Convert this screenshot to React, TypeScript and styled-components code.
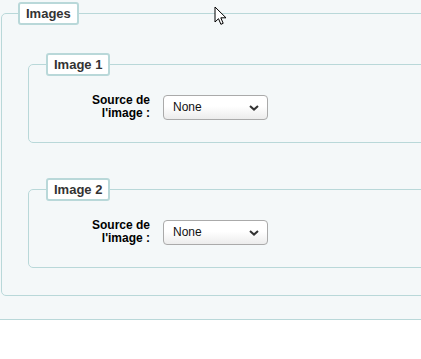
import styled, { createGlobalStyle } from "styled-components";

const GlobalStyle = createGlobalStyle`
  html, body {
    margin: 0;
    padding: 0;
    overflow: hidden;
    background: #fff;
  }
  body {
    font-family: "Liberation Sans", Arial, sans-serif;
    color: #000;
  }
`;

const Page = styled.div`
  position: relative;
  overflow: hidden;
  background: #f4f8f9;
  border-bottom: 1px solid #b9d8d9;
  padding: 2px 0 23px 1px;
`;

const Group = styled.fieldset`
  margin: 0 -40px 0 0;
  padding: 28px 0 27px 16px;
  border: 1px solid #b9d8d9;
  border-radius: 5px;
  background: #f4f8f9;
  min-width: 0;
`;

const SubGroup = styled.fieldset`
  margin: 0 -40px 0 10px;
  padding: 18px 0 22px 17px;
  border: 1px solid #b9d8d9;
  border-radius: 5px;
  background: #f4f8f9;
  min-width: 0;

  & + & {
    margin-top: 35px;
  }
`;

const Legend = styled.legend`
  padding: 2px 6px;
  margin: 0;
  background: #fff;
  border: 2px solid #b9d8d9;
  border-radius: 3px;
  font-size: 13px;
  line-height: 15px;
  font-weight: bold;
  color: #333;
`;

const Row = styled.div`
  display: flex;
  align-items: center;
  gap: 13px;
`;

const Label = styled.label`
  width: 104px;
  text-align: right;
  font-size: 12px;
  line-height: 13px;
  font-weight: bold;
`;

const SelectWrap = styled.div`
  position: relative;
  width: 105px;
  height: 25px;
`;

const Select = styled.select`
  appearance: none;
  width: 100%;
  height: 100%;
  margin: 0;
  padding: 0 0 0 9px;
  border: 1px solid #aaa;
  border-radius: 4px;
  background: linear-gradient(#fff 0%, #fff 45%, #ececec 100%);
  font-family: "Liberation Sans", Arial, sans-serif;
  font-size: 12px;
  color: #111;
  outline: none;
`;

const Chevron = styled.svg`
  position: absolute;
  right: 9px;
  top: 10px;
  pointer-events: none;
`;

const Cursor = styled.svg`
  position: absolute;
  left: 214px;
  top: 6px;
`;

function ImageSource({ id }: { id: string }) {
  return (
    <Row>
      <Label htmlFor={id}>
        Source de
        <br />
        l'image :
      </Label>
      <SelectWrap>
        <Select id={id} defaultValue="none">
          <option value="none">None</option>
          <option value="url">URL</option>
        </Select>
        <Chevron width="10" height="6" viewBox="0 0 10 6">
          <path d="M1 1l4 3.6L9 1" fill="none" stroke="#333" strokeWidth="2" />
        </Chevron>
      </SelectWrap>
    </Row>
  );
}

export default function App() {
  return (
    <>
      <GlobalStyle />
      <Page>
        <Group>
          <Legend>Images</Legend>
          <SubGroup>
            <Legend>Image 1</Legend>
            <ImageSource id="image1" />
          </SubGroup>
          <SubGroup>
            <Legend>Image 2</Legend>
            <ImageSource id="image2" />
          </SubGroup>
        </Group>
        <Cursor width="13" height="20" viewBox="0 0 13 20">
          <path
            d="M1 1v15l3.5-3.3 2.4 5.6 2.3-1-2.4-5.5H12z"
            fill="#fff"
            stroke="#000"
            strokeWidth="1"
            strokeLinejoin="round"
          />
        </Cursor>
      </Page>
    </>
  );
}
